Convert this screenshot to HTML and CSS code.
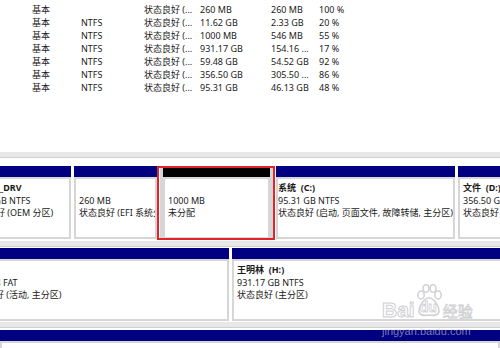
FILE: index.html
```html
<!DOCTYPE html>
<html>
<head>
<meta charset="utf-8">
<link rel="stylesheet" href="styles.css">
</head>
<body>
<div class="list">
  <div class="row"><span>基本</span><span></span><span>状态良好 (...</span><span>260 MB</span><span>260 MB</span><span>100 %</span></div>
  <div class="row"><span>基本</span><span>NTFS</span><span>状态良好 (...</span><span>11.62 GB</span><span>2.33 GB</span><span>20 %</span></div>
  <div class="row"><span>基本</span><span>NTFS</span><span>状态良好 (...</span><span>1000 MB</span><span>546 MB</span><span>55 %</span></div>
  <div class="row"><span>基本</span><span>NTFS</span><span>状态良好 (...</span><span>931.17 GB</span><span>154.16 ...</span><span>17 %</span></div>
  <div class="row"><span>基本</span><span>NTFS</span><span>状态良好 (...</span><span>59.48 GB</span><span>54.52 GB</span><span>92 %</span></div>
  <div class="row"><span>基本</span><span>NTFS</span><span>状态良好 (...</span><span>356.50 GB</span><span>305.50 ...</span><span>86 %</span></div>
  <div class="row"><span>基本</span><span>NTFS</span><span>状态良好 (...</span><span>95.31 GB</span><span>46.13 GB</span><span>48 %</span></div>
</div>
<div class="map">
  <div class="band"></div>
  <div class="disk disk1">
    <div class="part w-oem"><div class="bar"></div><div class="box"><div class="name">WINRE_DRV</div><div>11.62 GB NTFS</div><div>状态良好 (OEM 分区)</div></div></div>
    <div class="part w-efi"><div class="bar"></div><div class="box"><div class="name">&nbsp;</div><div>260 MB</div><div>状态良好 (EFI 系统分区)</div></div></div>
    <div class="part un w-un"><div class="bar"></div><div class="box"><div class="name">&nbsp;</div><div>1000 MB</div><div>未分配</div></div></div>
    <div class="part w-c"><div class="bar"></div><div class="box tight"><div class="name">系统&nbsp;&nbsp;(C:)</div><div>95.31 GB NTFS</div><div>状态良好 (启动, 页面文件, 故障转储, 主分区)</div></div></div>
    <div class="part w-d"><div class="bar"></div><div class="box"><div class="name">文件&nbsp;&nbsp;(D:)</div><div>356.50 GB NTFS</div><div>状态良好 (主分区)</div></div></div>
  </div>
  <div class="band"></div>
  <div class="disk disk2">
    <div class="part w-fat"><div class="bar"></div><div class="box"><div class="name">&nbsp;</div><div>7.50 GB FAT</div><div>状态良好 (活动, 主分区)</div></div></div>
    <div class="part w-h"><div class="bar"></div><div class="box"><div class="name">王明林&nbsp;&nbsp;(H:)</div><div>931.17 GB NTFS</div><div>状态良好 (主分区)</div></div></div>
  </div>
  <div class="band"></div>
  <div class="disk disk3">
    <div class="part w-full"><div class="bar"></div><div class="box"></div></div>
  </div>
  <div class="redbox"></div>
  <div class="watermark">
    <div class="wm-logo">
      <span class="wm-bai">Bai</span>
      <span class="wm-paw">
        <svg width="26" height="34" viewBox="0 0 26 34">
          <ellipse cx="5" cy="11" rx="3.2" ry="4" fill="none" stroke="#d2d2d6" stroke-width="1.6"/>
          <ellipse cx="10" cy="4.5" rx="3" ry="3.8" fill="none" stroke="#d2d2d6" stroke-width="1.6"/>
          <ellipse cx="17" cy="4.5" rx="3" ry="3.8" fill="none" stroke="#d2d2d6" stroke-width="1.6"/>
          <ellipse cx="22" cy="11" rx="3.2" ry="4" fill="none" stroke="#d2d2d6" stroke-width="1.6"/>
          <path d="M13 14 C8 14 3 22 3 27 C3 31 7 32 13 31 C19 32 23 31 23 27 C23 22 18 14 13 14 Z" fill="none" stroke="#d2d2d6" stroke-width="1.6"/>
        </svg>
        <span class="wm-du">du</span>
      </span>
      <span class="wm-jy">经验</span>
    </div>
    <div class="wm-url">jingyan.baidu.com</div>
  </div>
</div>
</body>
</html>
```
FILE: styles.css
```css
body {
  margin: 0;
  width: 500px;
  height: 348px;
  overflow: hidden;
  background: #ffffff;
  color: #1a1a1a;
  font-family: "Noto Sans", "Noto Sans CJK SC", sans-serif;
  font-size: 9px;
  line-height: 13px;
}

.list {
  height: 152px;
  padding-top: 3px;
  box-sizing: border-box;
}

.row {
  display: grid;
  grid-template-columns: 49px 63px 56px 71px 48px auto;
  padding-left: 32px;
  height: 13px;
  white-space: nowrap;
}

.map {
  position: relative;
  height: 196px;
  overflow: hidden;
}

.band {
  height: 6px;
  background: #e8e8e8;
  border-bottom: 1px solid #d0d0d0;
  box-sizing: border-box;
}

.disk {
  display: flex;
  gap: 3px;
  white-space: nowrap;
}

.disk1 { margin-left: -36px; padding: 8px 0 2px; }
.disk2 { margin-left: -37px; padding: 1px 0 1px; }
.disk3 { padding-top: 2px; }

.part {
  flex: none;
  display: flex;
  flex-direction: column;
  overflow: hidden;
}

.part.un {
  background: #d6d6d6;
  padding: 0 3px;
  box-sizing: border-box;
}

.w-oem { width: 107px; }
.w-efi { width: 83px; }
.w-un { width: 113px; }
.w-c { width: 179px; }
.w-d { width: 100px; }
.w-fat { width: 266px; }
.w-h { width: 300px; }
.w-full { width: 500px; }

.bar {
  height: 11px;
  background: #000080;
}

.un .bar { background: #000000; }

.box {
  height: 62px;
  border: 2px solid #d6d6d6;
  box-sizing: border-box;
  background: #ffffff;
  padding: 3px 0 0 3px;
  line-height: 12.5px;
  overflow: hidden;
}

.box.tight { padding-left: 0; }

.name { font-weight: bold; }

.redbox {
  position: absolute;
  left: 157px;
  top: 14px;
  width: 118px;
  height: 74px;
  border: 2px solid #e4222a;
  box-sizing: border-box;
}

.watermark {
  position: absolute;
  left: 382px;
  top: 130px;
  width: 100px;
}

.wm-logo {
  display: flex;
  align-items: flex-end;
  height: 38px;
}

.wm-bai {
  font-family: "Liberation Sans", sans-serif;
  font-weight: bold;
  font-size: 21px;
  line-height: 20px;
  color: rgba(255, 255, 255, 0.9);
  -webkit-text-stroke: 1px #cfcfd3;
}

.wm-paw {
  position: relative;
  width: 26px;
  height: 36px;
  margin: 0 1px;
}

.wm-paw svg {
  position: absolute;
  left: 0;
  top: 0;
}

.wm-du {
  position: absolute;
  left: 4px;
  top: 16px;
  font-family: "Liberation Sans", sans-serif;
  font-weight: bold;
  font-size: 14px;
  line-height: 14px;
  color: rgba(255, 255, 255, 0.9);
  -webkit-text-stroke: 0.8px #cfcfd3;
}

.wm-jy {
  font-family: "Noto Sans CJK SC", sans-serif;
  font-size: 15px;
  line-height: 18px;
  color: rgba(255, 255, 255, 0.9);
  -webkit-text-stroke: 0.8px #cfcfd3;
}

.wm-url {
  margin-top: 5px;
  font-family: "Liberation Sans", sans-serif;
  font-size: 11px;
  line-height: 12px;
  color: rgba(205, 205, 220, 0.6);
}
```
